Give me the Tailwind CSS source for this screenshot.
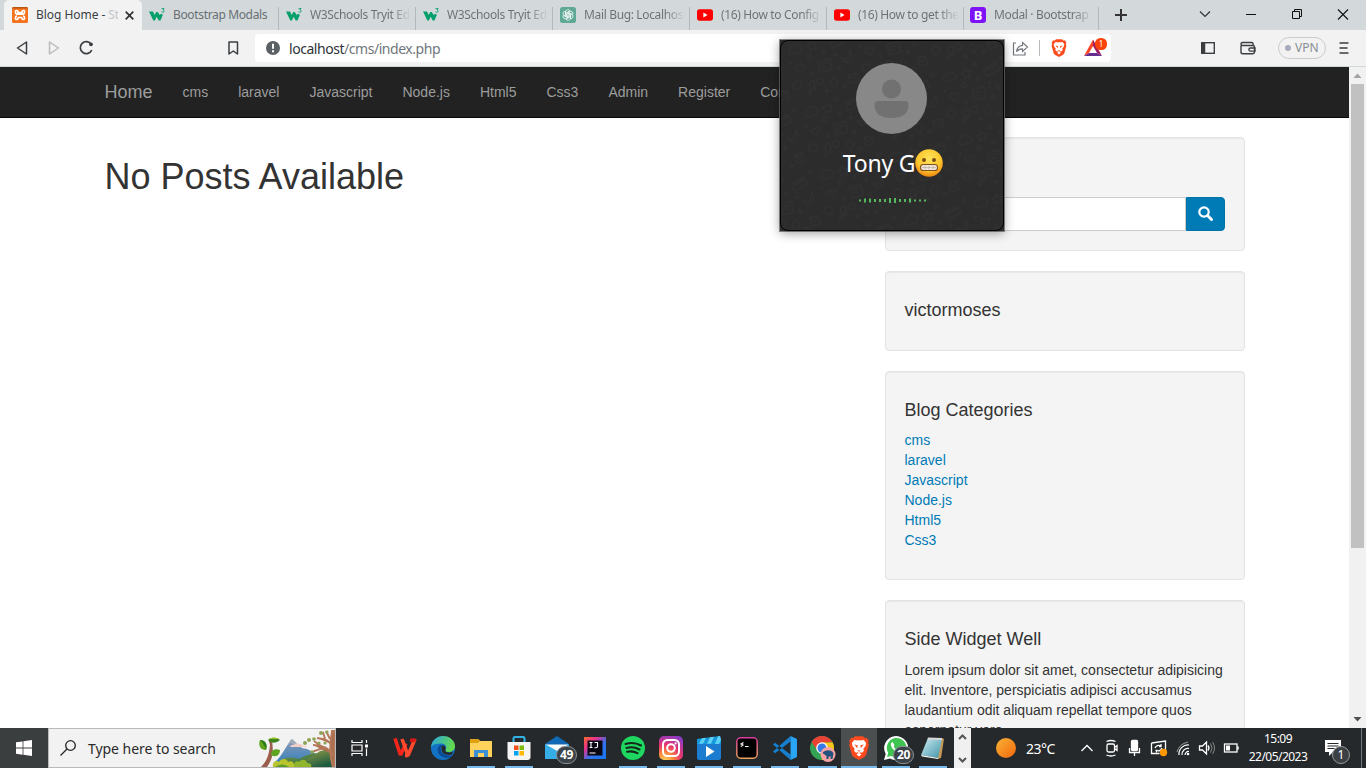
<!DOCTYPE html>
<html lang="en">
<head>
<meta charset="utf-8">
<title>Blog Home</title>
<script src="https://cdn.jsdelivr.net/npm/@tailwindcss/browser@4"></script>
</head>
<body class="w-[1366px] h-[768px] overflow-hidden bg-white font-['Noto_Sans','Open_Sans',sans-serif]">
<svg width="0" height="0" class="absolute">
  <defs>
    <symbol id="w3" viewBox="0 0 16 16"><path d="M0 4.500h4l1.700 3.400L7.200 5h1.600l1.900 3L12 6.800l1.900 1-2.400 5.600H9.700L7.700 9.800 5.900 13.400H4.300z" fill="#04a06c"/><path d="M12.500 1.600h2.600L13.900 3c1.600 0 1.600 2.300-.1 2.300-.6 0-1-.2-1.300-.6" fill="none" stroke="#04a06c" stroke-width=".9"/></symbol>
    <symbol id="yt" viewBox="0 0 16 16"><rect y="2.300" width="16" height="11.400" rx="2.600" fill="#f00"/><path d="M6.400 5.600v4.800L10.500 8z" fill="#fff"/></symbol>
    <symbol id="brave" viewBox="0 0 16 18"><path d="M3.800 1.500 5 .2h6l1.200 1.300 1.500-.2 1.700 2.200-.6 1.500.6 1.800-2 7.100c-.3 1-1 1.500-1.700 2L8 18l-3.700-2.100c-.8-.5-1.400-1-1.700-2l-2-7.100.6-1.800-.6-1.500 1.700-2.200z" fill="#fb4a1d"/><path d="M8 3.200c1 .3 2.400-.2 3.600-.2l1.700 2.300-.4 2.200-1.700 2.200.6 1.300-1.600 1.500-1.200-.3-1 .7-1-.7-1.200.3-1.600-1.500.6-1.300-1.700-2.200-.4-2.200L4.400 3C5.600 3 7 3.500 8 3.200zM8 12.800l1.900.9L8 15.400l-1.900-1.700z" fill="#fff"/><path d="M4.500 6.400l2.400.6-.2 2.200zM11.500 6.400l-2.400.6.2 2.200zM6.600 10.900h2.800L8 11.900z" fill="#fb4a1d"/></symbol>
  </defs>
</svg>
<div class="w-full h-full flex flex-col relative">

  <!-- Tab strip -->
  <div class="h-[30px] bg-[#d3d9db] flex pl-1 text-[12px] text-[#696f73] tracking-[-0.35px] shrink-0">
    <div class="w-[138px] bg-[#f2f2f2] rounded-t-[5px] flex items-center pl-2 pr-[8px]">
      <svg class="w-4 h-4 shrink-0" viewBox="0 0 16 16"><rect width="16" height="16" rx="1.500" fill="#f4731f"/><path d="M0 1.500Q0 0 1.500 0h13Q16 0 16 1.500z" fill="#b75510"/><g fill="none" stroke="#fff" stroke-width="1.700"><path d="M6 5.500V4.800Q6 3.500 4.700 3.500T3.400 5t1.400 2.200h6.400Q12.600 6.800 12.600 5t-1.300-1.500T10 4.800v.7zM6 10.500v.7q0 1.300-1.300 1.300T3.400 11t1.400-2.200M10 10.500v.7q0 1.300 1.300 1.300T12.600 11t-1.400-2.200M6 10.500h4M6 5.500h4"/></g></svg>
      <div class="ml-2 w-[82px] overflow-hidden whitespace-nowrap text-[#3b3f43] tracking-[-0.05px]">Blog Home - <span class="text-[#c3c6c8]">St</span></div>
      <svg class="w-[9px] h-[9px] ml-auto" viewBox="0 0 9 9"><path d="M.7.7l7.600 7.600M8.300.7.7 8.300" stroke="#333" stroke-width="1.700"/></svg>
    </div>
    <div class="w-[137px] flex items-center pl-[7px] relative after:absolute after:right-0 after:top-[7px] after:h-[23px] after:w-px after:bg-[#b3b8ba]"><svg class="w-4 h-4 shrink-0"><use href="#w3"/></svg><div class="ml-2 w-[105px] whitespace-nowrap">Bootstrap Modals</div></div>
    <div class="w-[137px] flex items-center pl-[7px] relative after:absolute after:right-0 after:top-[7px] after:h-[23px] after:w-px after:bg-[#b3b8ba]"><svg class="w-4 h-4 shrink-0"><use href="#w3"/></svg><div class="ml-2 w-[101px] whitespace-nowrap bg-linear-to-r from-[#696f73] from-80% to-[#d3d9db] bg-clip-text text-transparent">W3Schools Tryit Ed</div></div>
    <div class="w-[137px] flex items-center pl-[7px] relative after:absolute after:right-0 after:top-[7px] after:h-[23px] after:w-px after:bg-[#b3b8ba]"><svg class="w-4 h-4 shrink-0"><use href="#w3"/></svg><div class="ml-2 w-[101px] whitespace-nowrap bg-linear-to-r from-[#696f73] from-80% to-[#d3d9db] bg-clip-text text-transparent">W3Schools Tryit Ed</div></div>
    <div class="w-[137px] flex items-center pl-[7px] relative after:absolute after:right-0 after:top-[7px] after:h-[23px] after:w-px after:bg-[#b3b8ba]"><svg class="w-4 h-4 shrink-0" viewBox="0 0 16 16"><rect width="16" height="16" rx="2.500" fill="#60a896"/><g fill="none" stroke="#fff" stroke-width=".7"><path id="gp" d="M5.700 9.300V4.900a2.300 2.300 0 0 1 4.300-1.100L6.900 5.600v3.300"/><use href="#gp" transform="rotate(60 8 8)"/><use href="#gp" transform="rotate(120 8 8)"/><use href="#gp" transform="rotate(180 8 8)"/><use href="#gp" transform="rotate(240 8 8)"/><use href="#gp" transform="rotate(300 8 8)"/></g></svg><div class="ml-2 w-[101px] whitespace-nowrap bg-linear-to-r from-[#696f73] from-80% to-[#d3d9db] bg-clip-text text-transparent">Mail Bug: Localhost</div></div>
    <div class="w-[137px] flex items-center pl-[7px] relative after:absolute after:right-0 after:top-[7px] after:h-[23px] after:w-px after:bg-[#b3b8ba]"><svg class="w-4 h-4 shrink-0"><use href="#yt"/></svg><div class="ml-2 w-[101px] whitespace-nowrap bg-linear-to-r from-[#696f73] from-80% to-[#d3d9db] bg-clip-text text-transparent">(16) How to Config</div></div>
    <div class="w-[137px] flex items-center pl-[7px] relative after:absolute after:right-0 after:top-[7px] after:h-[23px] after:w-px after:bg-[#b3b8ba]"><svg class="w-4 h-4 shrink-0"><use href="#yt"/></svg><div class="ml-2 w-[101px] whitespace-nowrap bg-linear-to-r from-[#696f73] from-80% to-[#d3d9db] bg-clip-text text-transparent">(16) How to get the</div></div>
    <div class="w-[135px] flex items-center pl-[6px] relative after:absolute after:right-0 after:top-[7px] after:h-[23px] after:w-px after:bg-[#b3b8ba]"><div class="w-4 h-4 rounded-[3px] bg-[#7e13f8] text-white font-bold text-[13px] leading-4 text-center shrink-0">B</div><div class="ml-2 w-[99px] whitespace-nowrap bg-linear-to-r from-[#696f73] from-80% to-[#d3d9db] bg-clip-text text-transparent">Modal · Bootstrap</div></div>
    <svg class="w-[267px] h-[30px]" viewBox="1099 0 267 30" fill="none" stroke="#111"><path d="M1115 15h12M1121 9v12" stroke="#333" stroke-width="2"/><path d="m1200 11.500 5 5 5-5" stroke="#333" stroke-width="1.200"/><path d="M1246 14.500h10M1292.500 11.500h7v7h-7zM1294.500 11.500v-2h7v7h-2"/><path d="m1338 9.500 10 10M1348 9.500l-10 10" stroke-width="1.100"/></svg>
  </div>

  <!-- Toolbar -->
  <div class="h-[37px] bg-[#f2f2f2] border-b border-[#cfdad8] flex shrink-0 items-center">
    <svg class="w-[255px] h-9 shrink-0" viewBox="0 30 255 36" fill="none" stroke-width="1.500" stroke-linejoin="round"><path d="M26.500 42v12L17.500 48z" stroke="#3b3f43"/><path d="M49.500 42v12l9-6z" stroke="#bbb"/><path d="M91.300 44.300A6 6 0 1 0 91.800 50" stroke="#3b3f43" stroke-width="1.700"/><circle cx="91" cy="44.300" r="1.900" fill="#3b3f43"/><path d="M229 42h8.500v12l-4.200-3-4.300 3z" stroke="#3b3f43" /></svg>
    <div class="w-[856px] h-7 bg-white rounded flex items-center pl-[11px] text-[14px] text-[#70767b]">
      <svg class="w-[14px] h-[14px]" viewBox="0 0 14 14"><circle cx="7" cy="7" r="7" fill="#5b6065"/><path d="M7 2.800v5M7 9.200v2" stroke="#fff" stroke-width="2"/></svg>
      <div class="ml-[9px] whitespace-nowrap tracking-[-0.46px]"><span class="text-[#2f3337]">localhost</span>/cms/index.php</div>
      <svg class="ml-auto w-[111px] h-7 shrink-0" viewBox="1000 34 111 28"><path d="M1016 43h-2.500v12h11.500v-3" fill="none" stroke="#70767b" stroke-width="1.200"/><path d="M1022.500 42.500l5 4.500-5 4.500v-2.600c-3 0-4.500.6-6 2.900.4-4 2.500-6 6-6.400z" fill="none" stroke="#70767b" stroke-width="1.100"/><path d="M1039.500 40v16" stroke="#bbb"/><svg x="1051" y="39" width="16" height="18" viewBox="0 0 16 18"><use href="#brave" width="16" height="18"/></svg><path d="M1093 39.500 1084 56l5-3 4-7z" fill="#ff4724"/><path d="M1093 39.500 1102 56l-5-3-4-7z" fill="#9e1f63"/><path d="M1084 56h18l-5-3h-8z" fill="#662d91"/><rect x="1095" y="38" width="12" height="12" rx="5.500" fill="#fb4209"/><text x="1101" y="47" font-size="8" fill="#fff" text-anchor="middle">1</text></svg>
    </div>
    <svg class="ml-auto w-[167px] h-9 shrink-0" viewBox="1111 30 167 36" fill="none" stroke="#3b3f43" stroke-width="1.400"><rect x="1201.700" y="42.700" width="12.600" height="10.600"/><path d="M1203.500 43v10" stroke-width="3.500"/><path d="M1241 45.500v6.500q0 1.800 1.800 1.800h10q1.700 0 1.700-1.700v-5q0-1.600-1.700-1.600h-10.300q-1.500 0-1.500-1.500t1.500-1.500h9.200q1.500 0 1.500 2.300M1255 48h-4.500q-1.600 0-1.600 1.500t1.600 1.600h4.500z"/></svg>
    <div class="w-12 h-[22px] rounded-full border border-[#ccc] flex items-center pl-[6px] text-[12px] text-[#888e94] shrink-0"><span class="w-[6px] h-[6px] rounded-full bg-[#a6abc0] mr-[4px]"></span>VPN</div>
    <svg class="w-10 h-9 shrink-0" viewBox="1326 30 40 36"><path d="M1339.500 43h9M1339.500 48h8M1339.500 53h9" stroke="#3b3f43" stroke-width="1.700"/></svg>
  </div>

  <!-- Web page -->
  <div class="h-[661px] flex shrink-0 overflow-hidden font-['Liberation_Sans',Arial,sans-serif] text-[14px] leading-5 text-[#333]">
    <div class="w-[1349px]">
      <nav class="h-[51px] bg-[#222] border-b border-[#080808] flex items-center pl-[104.5px] gap-[30px] text-[#9d9d9d]">
        <a class="text-[18px]">Home</a><a>cms</a><a>laravel</a><a>Javascript</a><a>Node.js</a><a>Html5</a><a>Css3</a><a>Admin</a><a>Register</a><a>Contact</a>
      </nav>
      <div class="flex pt-[19px] pl-[104.5px]">
        <main class="w-[780px] pt-5"><h1 class="text-[36px] leading-[39.6px] font-medium">No Posts Available</h1></main>
        <aside class="w-[360px] flex flex-col gap-5">
          <section class="bg-[#f4f4f4] border border-[#e3e3e3] rounded p-[19px] shadow-[inset_0_1px_1px_rgba(0,0,0,.05)]"><h4 class="text-[18px] leading-[19.8px] my-2.5">Blog Search</h4>
            <div class="flex h-[34px]"><div class="flex-1 bg-white border border-[#ccc] rounded-l"></div><div class="w-[39px] bg-[#007bb6] rounded-r border border-[#0073a9] flex items-center justify-center"><svg class="w-[15px] h-[15px] mb-px" viewBox="0 0 15 15" fill="none" stroke="#fff"><circle cx="6" cy="6" r="4.700" stroke-width="2.200"/><path d="m9.500 9.500 4 4" stroke-width="3" stroke-linecap="round"/></svg></div></div></section>
          <section class="bg-[#f4f4f4] border border-[#e3e3e3] rounded p-[19px] shadow-[inset_0_1px_1px_rgba(0,0,0,.05)]"><h4 class="text-[18px] leading-[19.8px] my-2.5">victormoses</h4></section>
          <section class="bg-[#f4f4f4] border border-[#e3e3e3] rounded p-[19px] shadow-[inset_0_1px_1px_rgba(0,0,0,.05)]"><h4 class="text-[18px] leading-[19.8px] my-2.5">Blog Categories</h4>
            <ul class="text-[#007bb6] mb-2.5"><li>cms</li><li>laravel</li><li>Javascript</li><li>Node.js</li><li>Html5</li><li>Css3</li></ul></section>
          <section class="bg-[#f4f4f4] border border-[#e3e3e3] rounded p-[19px] shadow-[inset_0_1px_1px_rgba(0,0,0,.05)]"><h4 class="text-[18px] leading-[19.8px] my-2.5">Side Widget Well</h4>
            <p>Lorem ipsum dolor sit amet, consectetur adipisicing elit. Inventore, perspiciatis adipisci accusamus laudantium odit aliquam repellat tempore quos aspernatur vero.</p></section>
        </aside>
      </div>
    </div>
    <div class="w-[17px] bg-[#f1f1f1] flex flex-col items-center">
      <svg class="w-[17px] h-[17px] shrink-0" viewBox="0 0 17 17"><path d="M4.500 11h8L8.500 6.500z" fill="#a3a3a3"/></svg>
      <div class="w-[13px] h-[464px] bg-[#c1c1c1]"></div>
      <svg class="w-[17px] h-[17px] mt-auto" viewBox="0 0 17 17"><path d="M4.500 6h8L8.500 10.500z" fill="#505050"/></svg>
    </div>
  </div>

  <!-- Taskbar -->
  <div class="h-10 bg-[#25292b] flex shrink-0 text-white">
    <div class="w-12 bg-[#3b3e3f] flex items-center justify-center"><svg class="w-4 h-4" viewBox="0 0 16 16" fill="#fff"><path d="M0 2.300 6.600 1.400V7.600H0zM7.400 1.300 16 0v7.600H7.400zM0 8.400h6.600v6.300L0 13.800zM7.400 8.400H16V16l-8.600-1.300z"/></svg></div>
    <div class="w-72 bg-[#f2f2f2] border border-[#b9b9b9] flex items-center pl-[11px] text-[#2b2b2b] text-[14px]">
      <svg class="w-4 h-4 shrink-0" viewBox="0 0 16 16" fill="none" stroke="#222" stroke-width="1.300"><circle cx="10.500" cy="5.500" r="4.800"/><path d="M7 9 .5 15.500"/></svg>
      <div class="ml-3 whitespace-nowrap tracking-[-0.05px]">Type here to search</div>
      <svg class="ml-auto w-[76px] h-[38px] shrink-0" viewBox="260 729 76 38">
        <defs><linearGradient id="mt" x2="0" y2="1"><stop stop-color="#8a9ab4"/><stop offset="1" stop-color="#2b7ec0"/></linearGradient><linearGradient id="hl" x2="1" y2="1"><stop stop-color="#7d9c4a"/><stop offset="1" stop-color="#1c6142"/></linearGradient><linearGradient id="h2" x2=".6" y2="1"><stop stop-color="#a5a448"/><stop offset="1" stop-color="#1d5c40"/></linearGradient></defs>
        <path d="M276 762c8-7 13-20 17-23 4 3 7 7 10 9 7 1 12 4 16 8l4 11h-47z" fill="url(#mt)"/><path d="M293 739l5 5-3 1-3-2-3 3z" fill="#a7aebb"/>
        <path d="M291 747q1-3 4-2 2-3 5-1 3-1 4 2 4-1 4 1z" fill="#f3cfc9"/>
        <path d="M276 767c5-10 15-11 24-8 8-5 20-7 30-7v15z" fill="url(#hl)"/><path d="M300 767c5-8 14-10 21-16 6-2 11-1 13-1v17z" fill="url(#h2)"/>
        <path d="M262 767c5-5 8-11 9-22l-1-4h3c2 12 0 19-5 26z" fill="#9b5e4a"/>
        <path d="M261 740c5 0 8 4 6 10-6 0-8-5-6-10z" fill="#62a51c"/><path d="M261 740c3 3 5 6 6 10 2-6-1-10-6-10z" fill="#2f7c1e"/>
        <path d="M269 740c3-3 8-3 12 0-3 3-9 4-12 0z" fill="#3d861d"/><path d="M270 739c3-2 7-2 10 0z" fill="#9bc52c"/>
        <path d="M272 755c0-5 4-7 9-5 0 5-4 8-9 5z" fill="#5fa41f"/>
        <path d="M333 731c-2 14-3 23 1 36h2v-36zM334 755c-4-8-12-10-20-10M327 748c-6 0-9 2-14 4M332 744c-4-6-10-5-14-6M326 739l-2-7M322 746l-7-5M331 739l-4-8" stroke="#b5795a" stroke-width="1.900" fill="#a9714f"/>
        <g fill="#8fa455"><circle cx="306" cy="743" r="2"/><circle cx="310" cy="740" r="2"/><circle cx="315" cy="739" r="1.800"/><circle cx="322" cy="733" r="2"/><circle cx="328" cy="732" r="1.600"/><circle cx="313" cy="752" r="1.800"/><circle cx="320" cy="743" r="1.600"/><circle cx="326" cy="743" r="1.600"/></g>
        <path d="M274 767c-1-6 4-7 6-5 2-4 8-4 9 0 4-2 7 1 6 5z" fill="#b8c52e"/><path d="M295 767c-1-5 3-7 5-5 3-4 8-2 8 1 4 0 5 2 4 4z" fill="#8fb52c"/><path d="M276 767q7-5 14 0z" fill="#5e9a2a"/>
      </svg>
    </div>
    <div class="w-[50px] flex items-center pl-[15px]"><svg class="w-[18px] h-4" viewBox="0 0 18 16" fill="none" stroke="#fff" stroke-width="1.200"><path d="M1 0v2.500h10V0M1 16v-2.500h10V16M1 5h10v6H1zM15.500 0v3M15.500 8.500V16"/><path d="M14 4.500h3v3h-3z" fill="#fff" stroke="none"/></svg></div>

    <div class="w-[38px] flex items-center justify-center"><svg class="w-6 h-5" viewBox="0 0 24 20" fill="none" stroke-width="3.600" stroke-linejoin="bevel"><path d="M2 .5 7.500 17 13 5.500" stroke="#f5251c"/><path d="M9 1l6 16.500L22 1" stroke="#ff4a2e"/><path d="M17 2.300h5.500" stroke="#d91515"/><path d="M12 17.500h3.500" stroke="#ff4a2e"/></svg></div>
    <div class="w-[38px] flex items-center justify-center"><svg class="w-6 h-6" viewBox="0 0 24 24"><defs><linearGradient id="eg" x2="1" y2=".3"><stop stop-color="#2aa5e0"/><stop offset="1" stop-color="#63d94e"/></linearGradient></defs><circle cx="12" cy="12" r="12" fill="#1472c4"/><path d="M0 11C1 4 6 0 12 0c7 0 12 5 12 10 0 4-3 6-7 6-2 0-3-1-2.500-2 2-3 0-6.500-4-6.500C6 7.500 2 8 0 11z" fill="url(#eg)"/><path d="M9 9c-5 4-2 12 6 13 3 .2 5-.5 7-3-3 1.300-8 1-11-2.500C9 14 9 11 11 9z" fill="#0b4b96"/><path d="M10.500 10c3-1.500 5 1.500 3.700 4 .3 3 5 3 8 1.500L21 18.500c-5 1.500-11-.5-10.500-6.500z" fill="#25292b"/></svg></div>
    <div class="w-[38px] flex items-center justify-center relative after:absolute after:bottom-0 after:inset-x-[5px] after:h-[2px] after:bg-[#76b9ed]"><svg class="w-[22px] h-[18px]" viewBox="0 0 22 18"><path d="M0 0h8l2 2h12v16H0z" fill="#ffd35b"/><path d="M0 0h8l2 2-2 2H0z" fill="#dfa013"/><path d="M4 18v-7h14v7h-4v-4H8v4z" fill="#3a8fd5"/></svg></div>
    <div class="w-[38px] flex items-center justify-center relative after:absolute after:bottom-0 after:inset-x-[5px] after:h-[2px] after:bg-[#76b9ed]"><svg class="w-6 h-6" viewBox="0 0 24 24"><path d="M6.500 7V2.500Q6.500 1 8 1h8q1.500 0 1.500 1.500V7" fill="none" stroke="#31b3e6" stroke-width="2"/><path d="M.5 6h23v15q0 3-3 3h-17q-3 0-3-3z" fill="#f5f5f5"/><path d="M7 9.500h4.500V14H7z" fill="#f25022"/><path d="M12.500 9.500H17V14h-4.500z" fill="#7fba00"/><path d="M7 15h4.500v4.500H7z" fill="#00a4ef"/><path d="M12.500 15H17v4.500h-4.500z" fill="#ffb900"/></svg></div>
    <div class="w-[38px] flex items-center justify-center relative"><svg class="w-6 h-6" viewBox="0 0 24 24"><path d="M0 8 12 0l12 8v14H0z" fill="#1169b5"/><path d="M1 8.500h22V18H1z" fill="#fff"/><path d="M0 8l14 8-14 7zM24 8v15H0l13-8z" fill="#35aee8"/></svg><span class="absolute left-[18px] top-[18px] w-[21px] h-[18px] rounded-full bg-[#3b4248] border border-[#8b9094] text-[12px] leading-4 font-bold text-center tracking-[-0.4px]">49</span></div>
    <div class="w-[38px] flex items-center justify-center"><svg class="w-[22px] h-[22px]" viewBox="0 0 22 22"><defs><linearGradient id="ij" x2="1" y2="1"><stop stop-color="#fc6b2a"/><stop offset=".3" stop-color="#e8318c"/><stop offset=".6" stop-color="#2f73ed"/><stop offset="1" stop-color="#1676f3"/></linearGradient></defs><rect width="22" height="22" fill="url(#ij)"/><rect x="3.500" y="3.500" width="15" height="15" fill="#0a0614"/><path d="M5.500 5.500h3M7 5.500v5M5.500 10.500h3M10.500 5.500h3v4q0 1.200-1.500 1.200h-1.500M5.500 16h6" stroke="#fff" stroke-width="1.100" fill="none"/></svg></div>
    <div class="w-[38px] flex items-center justify-center relative after:absolute after:bottom-0 after:inset-x-[5px] after:h-[2px] after:bg-[#76b9ed]"><svg class="w-6 h-6" viewBox="0 0 24 24"><circle cx="12" cy="12" r="12" fill="#1ed760"/><path d="M4.500 8c5-1.500 11-1 15.500 1.500M5.500 12c4-1.200 9-.7 13 1.500M6 15.800c4-1 7-.6 10.500 1.300" stroke="#15251a" stroke-width="2.100" stroke-linecap="round" fill="none"/></svg></div>
    <div class="w-[38px] flex items-center justify-center relative after:absolute after:bottom-0 after:inset-x-[5px] after:h-[2px] after:bg-[#76b9ed]"><svg class="w-6 h-6" viewBox="0 0 24 24"><defs><radialGradient id="ig" cx=".25" cy="1.050" r="1.150"><stop stop-color="#ffdb60"/><stop offset=".3" stop-color="#fb8a3c"/><stop offset=".6" stop-color="#e8366f"/><stop offset="1" stop-color="#8a3ac8"/></radialGradient></defs><rect width="24" height="24" rx="5" fill="url(#ig)"/><g fill="none" stroke="#fff" stroke-width="2"><rect x="4" y="4" width="16" height="16" rx="4.500"/><circle cx="12" cy="12" r="3.800"/></g><circle cx="16.600" cy="7.400" r="1.100" fill="#fff"/></svg></div>
    <div class="w-[38px] flex items-center justify-center relative after:absolute after:bottom-0 after:inset-x-[5px] after:h-[2px] after:bg-[#76b9ed]"><svg class="w-6 h-6" viewBox="0 0 24 24"><path d="M0 8h24v14q0 2-2 2H2q-2 0-2-2z" fill="#1b7cd0"/><path d="M0 3 23 0l1 4v4H0z" fill="#1599dc"/><path d="m5 2.300 4-.5-3 6H2zM13 1.300l4-.5-3 7h-4zM21 .3l2-.3 1 4-2 4h-4z" fill="#5cd1f5"/><path d="M9 10v11l8.500-5.500z" fill="#fff"/></svg></div>
    <div class="w-[38px] flex items-center justify-center relative after:absolute after:bottom-0 after:inset-x-[5px] after:h-[2px] after:bg-[#76b9ed]"><svg class="w-[22px] h-[22px]" viewBox="0 0 22 22"><defs><linearGradient id="tm" x2="0" y2="1"><stop stop-color="#d93c9c"/><stop offset="1" stop-color="#e9a05b"/></linearGradient></defs><rect x=".8" y=".8" width="20.400" height="20.400" rx="4" fill="#000" stroke="url(#tm)" stroke-width="1.500"/><path d="M7.500 5.500 5 7l2 1-2.200 1.500M9 9.500h3.500" stroke="#fff" stroke-width="1.100" fill="none"/></svg></div>
    <div class="w-[38px] flex items-center justify-center relative after:absolute after:bottom-0 after:inset-x-[5px] after:h-[2px] after:bg-[#76b9ed]"><svg class="w-6 h-6" viewBox="0 0 24 24"><path d="M0 8.500 2 6.800 17.500 18.500V24zM0 15.500l2 1.700L17.500 5.500V0z" fill="#1480cf"/><path d="M17.500 0 24 3v18l-6.500 3z" fill="#2aa4f4"/></svg></div>
    <div class="w-[37px] flex items-center justify-center relative after:absolute after:bottom-0 after:inset-x-[4px] after:h-[2px] after:bg-[#76b9ed]"><svg class="w-[26px] h-[26px] mt-px" viewBox="0 0 26 26"><circle cx="12" cy="12" r="12" fill="#34a353"/><path d="M1.600 6A12 12 0 0 1 22.400 6L12 7 7 14z" fill="#ea4335"/><path d="M12 6.500h10.700A12 12 0 0 1 11.500 24l6-10z" fill="#fbc315"/><circle cx="12" cy="12" r="5.800" fill="#fff"/><circle cx="12" cy="12" r="4.500" fill="#3779e6"/><circle cx="18" cy="18.500" r="7.500" fill="#f8a3a3"/><path d="M12.500 17c2-3 8-4 11 0l-1 6h-2v-3l-2 1v2h-2v-3z" fill="#23527c"/></svg></div>
    <div class="w-9 bg-[#4c4f50] flex items-center justify-center relative after:absolute after:bottom-0 after:inset-x-0 after:h-[2px] after:bg-[#76b9ed]"><svg class="w-[22px] h-6" viewBox="0 0 16 18"><use href="#brave"/></svg></div>
    <div class="w-[38px] flex items-center justify-center relative after:absolute after:bottom-0 after:inset-x-[5px] after:h-[2px] after:bg-[#76b9ed]"><svg class="w-6 h-6" viewBox="0 0 24 24"><path d="M0 24l1.700-6A12 12 0 1 1 6 22.400z" fill="#fff"/><path d="m3 21 1.200-4.200A9.800 9.800 0 1 1 7.300 20z" fill="#3fc351"/><path d="M8.500 6C6 7.500 6.500 10 9 13s6 5 8.500 3.500c1-.8 1-1.700.6-2.200L15.500 13l-1.500 1.500c-2-.8-3.500-2.300-4.300-4L10.500 9z" fill="#fff"/></svg><span class="absolute left-[16px] top-[18px] w-[21px] h-[18px] rounded-full bg-[#3b4248] border border-[#8b9094] text-[12px] leading-4 font-bold text-center tracking-[-0.4px]">20</span></div>
    <div class="w-9 flex items-center justify-center relative after:absolute after:bottom-0 after:inset-x-[4px] after:h-[2px] after:bg-[#76b9ed]"><svg class="w-6 h-6" viewBox="0 0 24 24"><defs><linearGradient id="np" x2="1" y2="1"><stop stop-color="#cfeef4"/><stop offset="1" stop-color="#3e93a8"/></linearGradient></defs><path d="M7 2h14l2 1-3 19-3 1z" fill="#c59a5a"/><path d="m7 2 14 1-4 19L0 19z" fill="url(#np)"/><path d="M7 1.500 21 2v2L6.500 3.500z" fill="#d9d9d9"/><path d="m0 19 17 3v1L1 20.500z" fill="#fff"/></svg></div>
    <div class="w-[3px]"></div>
    <div class="w-[17px] bg-[#f0f0f0]"><svg class="w-[17px] h-10" viewBox="0 0 17 40" fill="none" stroke="#555" stroke-width="2"><path d="m5 11 3.500-3.500L12 11M5 30l3.500 3.500L12 30"/></svg></div>
    <div class="flex items-center pl-[25px] w-[105px]"><div class="w-5 h-5 rounded-full bg-linear-to-br from-[#f9b233] to-[#f0650c]"></div><div class="ml-[10px] text-[14px] tracking-[-0.5px]">23°C</div></div>
    <svg class="w-[170px] h-10 shrink-0" viewBox="1076 728 170 40" fill="none" stroke="#fff" stroke-width="1.300"><path d="m1081.500 751 5.500-5.500 5.500 5.500"/><rect x="1107" y="744" width="7.500" height="8" rx="1.500"/><path d="M1114.500 747.500l2.500-2v5l-2.500-2M1106.500 741.500q4.500-2 9 0M1106.500 755q4.500 2 9 0"/><rect x="1131.500" y="740.500" width="6" height="10" rx="1" fill="#fff"/><path d="M1129.500 748v4.500h10V748M1134.500 753v3"/><path d="M1151.500 743l14-2v9M1151.500 743v10.500h8"/><path d="M1155 748q2-4 6-2v-2M1161.500 746.500h-2.500M1162 748q-1.500 4-5.500 2.500v2M1155.500 750.500h2"/><circle cx="1163.500" cy="752.500" r="3.700" fill="#ff9800" stroke="none"/><path d="M1179 755a9 9 0 0 1 10-10M1182 755a6 6 0 0 1 7-6.500M1185 755a3.500 3.500 0 0 1 4-3.500" stroke-width="1.200"/><path d="M1177 752q2-8 11-10" stroke="#999" stroke-width="1"/><circle cx="1188" cy="754" r="1.300" fill="#fff" stroke="none"/><path d="M1199.500 746h3l4-4v12l-4-4h-3zM1208 745.500q2 2.500 0 5"/><path d="M1210.500 743.500q3 4.500 0 9M1212.500 742q4 6 0 12" stroke="#888" stroke-width="1"/><rect x="1224.500" y="744" width="12.500" height="8"/><path d="M1238 746.500v3" stroke-width="1.500"/><rect x="1226" y="745.500" width="4" height="5" fill="#fff" stroke="none"/></svg>
    <div class="w-16 text-center text-[12px] leading-[18px] pt-[2px] tracking-[-0.53px] whitespace-nowrap">15:09<br>22/05/2023</div>
    <div class="w-[51px] relative pl-[15px] pt-3"><svg class="w-4 h-4" viewBox="0 0 16 16"><path d="M0 0h16v12H8l-4 4v-4H0z" fill="#fff"/><path d="M2.500 3.500h11M2.500 6h11M2.500 8.500h7" stroke="#25292b"/></svg><span class="absolute left-[22px] top-[18px] w-[18px] h-[18px] rounded-full bg-[#3b4044] border border-[#999] text-[12px] leading-4 text-center">1</span></div>
    <div class="w-px bg-[#74777a]"></div>
  </div>

  <!-- Call overlay -->
  <div class="absolute left-[780px] top-10 w-[224px] h-[191px] bg-[#2b2b2b] shadow-[0_2px_10px_rgba(0,0,0,.4),0_0_0_1px_rgba(120,120,120,.8)]">
    <div class="w-full h-full rounded-lg border border-black bg-[#2c2c2c] relative overflow-hidden flex flex-col items-center">
      <svg class="absolute inset-0 w-full h-full" fill="none" stroke="#343434"><defs><pattern id="doodle" width="84" height="76" patternUnits="userSpaceOnUse" patternTransform="rotate(-14) scale(.85)"><path d="M8 18q-4-6 2-8 3-5 7-1 6 0 5 5 0 4-4 4zM34 8l2 4 4 .5-3 3 1 4-4-2-4 2 1-4-3-3 4-.5zM55 14l16-4 2 9-16 4zM58 16l12-3M10 38c-5-6 3-8 4-3 2-5 9-2 4 3l-4 4zM36 34h14v13H36zM39 38h8M39 42h5M64 36q8 8 12-6 4 14-9 13zM20 56v10M20 56l6-2v9M44 62l5-6 5 6-5 7zM67 58h10v10H67zM68 59l4 5 4-5"/><circle cx="28" cy="26" r="3"/><circle cx="46" cy="24" r="1.500"/><circle cx="6" cy="55" r="5"/><circle cx="18" cy="67" r="2"/><circle cx="24" cy="64" r="2"/><circle cx="58" cy="48" r="2"/><circle cx="33" cy="57" r="4"/><circle cx="79" cy="6" r="2"/><circle cx="4" cy="28" r="1"/><circle cx="58" cy="31" r="1"/><circle cx="38" cy="70" r="1.500"/><circle cx="26" cy="46" r="1.500"/><circle cx="46" cy="6" r="2"/><circle cx="60" cy="70" r="2"/></pattern></defs><rect width="224" height="191" fill="url(#doodle)" stroke="none"/></svg>
      <svg class="relative mt-[21.500px] mr-px w-[71px] h-[71px] shrink-0" viewBox="0 0 71 71"><circle cx="35.500" cy="35.500" r="35.500" fill="#888"/><circle cx="35.500" cy="26" r="9.500" fill="#717171"/><path d="M22 38h27q3.500 0 3.500 3.500Q52.500 55 35.500 55T18.500 41.500Q18.500 38 22 38z" fill="#717171"/></svg>
      <div class="relative mt-[12.500px] h-[34px] flex items-center text-white text-[23px] leading-[34px] tracking-[-0.2px] whitespace-nowrap ml-[2px]">Tony G<svg class="w-7 h-7" viewBox="0 0 28 28"><defs><radialGradient id="em" cx=".5" cy=".35" r=".65"><stop stop-color="#ffe45c"/><stop offset=".65" stop-color="#fcc62c"/><stop offset="1" stop-color="#ee8412"/></radialGradient></defs><circle cx="14" cy="14" r="13.800" fill="url(#em)"/><circle cx="9" cy="11" r="2" fill="#7b4d14"/><circle cx="19" cy="11" r="2" fill="#7b4d14"/><rect x="5.500" y="15.500" width="17" height="6" rx="2.800" fill="#f1e6dc" stroke="#80521e" stroke-width="1.100"/><path d="M7 18.500h14M10 16.500v4M14 16.500v4M18 16.500v4" stroke="#b7a493" stroke-width=".6"/></svg></div>
      <svg class="absolute left-[78px] top-[156px]" width="70" height="7" viewBox="0 0 70 7" stroke="#55b85f" stroke-width="2"><path d="M1 2.500v2M6 1.500v4M11 1.500v4M16 2v3M21 2v3M26 2v3M31 1v5M36 1v5M41 2v3M46 2v3M51 1.500v4M56 2.500v2M61 2.500v2M66 2.500v2"/></svg>
    </div>
  </div>
</div>
</body>
</html>
